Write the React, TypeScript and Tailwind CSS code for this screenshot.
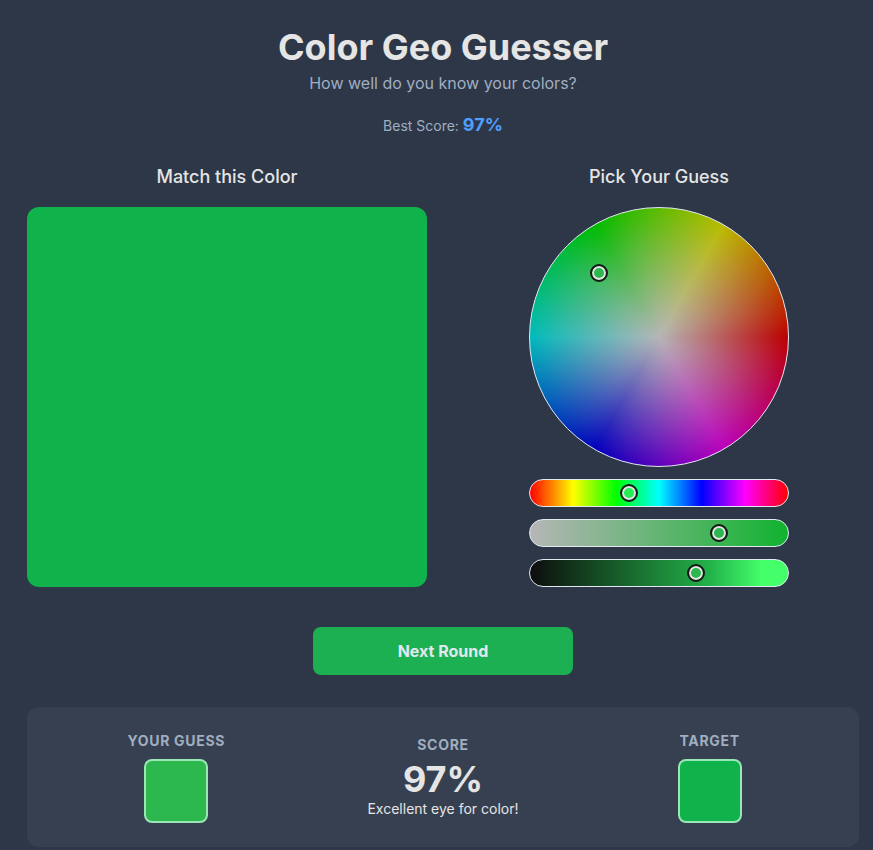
const font = "font-['Inter',sans-serif]";

function Thumb({ left, color, top }: { left: number; color: string; top?: number }) {
  return (
    <span
      className="absolute w-[18px] h-[18px] -ml-[9px] -mt-[9px] rounded-full border-2 border-[#171717] shadow-[inset_0_0_0_2px_#e5e5e5]"
      style={{ left, top: top ?? "50%", backgroundColor: color }}
    />
  );
}

function Slider({ gradient, left, color }: { gradient: string; left: number; color: string }) {
  return (
    <div className={`relative h-7 w-[260px] rounded-full border border-[#e2e8f0] ${gradient}`}>
      <Thumb left={left} color={color} />
    </div>
  );
}

function Swatch({ label, color }: { label: string; color: string }) {
  return (
    <div className="flex flex-col items-center">
      <h3 className="text-sm leading-5 font-bold uppercase tracking-[0.7px] text-[#a0aec0]">{label}</h3>
      <div className="mt-2 w-16 h-16 rounded-lg border-2 border-[#9ae6b4]" style={{ backgroundColor: color }} />
    </div>
  );
}

export default function App() {
  return (
    <div className={`${font} h-[850px] overflow-hidden bg-[#2d3748] pl-[27px] pr-[14px] pt-[27px] text-[#e5e5e5]`}>
      {/* Header */}
      <header className="text-center">
        <h1 className="text-4xl leading-10 font-bold">Color Geo Guesser</h1>
        <p className="mt-1 text-base leading-6 text-[#a0aec0]">How well do you know your colors?</p>
        <p className="mt-4 h-[26px] text-sm leading-6 text-[#a0aec0]">
          Best Score: <span className="text-lg font-bold text-[#4f9fff]">97%</span>
        </p>
      </header>

      {/* Game */}
      <div className="mt-[26px] grid grid-cols-2 gap-8">
        <div>
          <h2 className="text-center text-lg leading-7 font-medium mb-4">Match this Color</h2>
          <div className="h-[380px] rounded-xl bg-[#10b24c]" />
        </div>
        <div className="flex flex-col items-center">
          <h2 className="text-center text-lg leading-7 font-medium mb-4">Pick Your Guess</h2>
          <div className="relative w-[260px] h-[260px] rounded-full border border-[#e2e8f0] bg-[radial-gradient(circle_closest-side,#b6b6b6_0%,#b6b6b600_100%),conic-gradient(from_90deg,#bb0000,#bb00bb,#0000bb,#00bbbb,#00bb00,#bbbb00,#bb0000)]">
            <Thumb left={69} top={65} color="#2db84f" />
          </div>
          <div className="mt-3 flex flex-col gap-3">
            <Slider
              gradient="bg-[linear-gradient(to_right,#ff0000,#ffff00,#00ff00,#00ffff,#0000ff,#ff00ff,#ff0000)]"
              left={99}
              color="#22ee55"
            />
            <Slider
              gradient="bg-[linear-gradient(to_right,#b6b6b6,#10b32f)]"
              left={189}
              color="#2db84f"
            />
            <Slider
              gradient="bg-[linear-gradient(to_right,#0d0d0d,#22b34a_70%,#44ff6a_90%,#44ff6a)]"
              left={166}
              color="#2db84f"
            />
          </div>
        </div>
      </div>

      {/* Action */}
      <div className="mt-10 flex justify-center">
        <button className="w-[260px] h-12 rounded-lg bg-[#1cb053] text-base font-bold text-[#e2e8f0]">Next Round</button>
      </div>

      {/* Result */}
      <div className="mt-8 grid grid-cols-3 items-center rounded-xl bg-[#364050] px-4 py-6">
        <Swatch label="Your Guess" color="#2db84f" />
        <div className="flex flex-col items-center">
          <h3 className="mb-1 text-sm leading-5 font-bold uppercase tracking-[0.7px] text-[#a0aec0]">Score</h3>
          <div className="text-4xl leading-10 font-bold">97%</div>
          <p className="text-sm leading-5">Excellent eye for color!</p>
        </div>
        <Swatch label="Target" color="#10b24c" />
      </div>
    </div>
  );
}
